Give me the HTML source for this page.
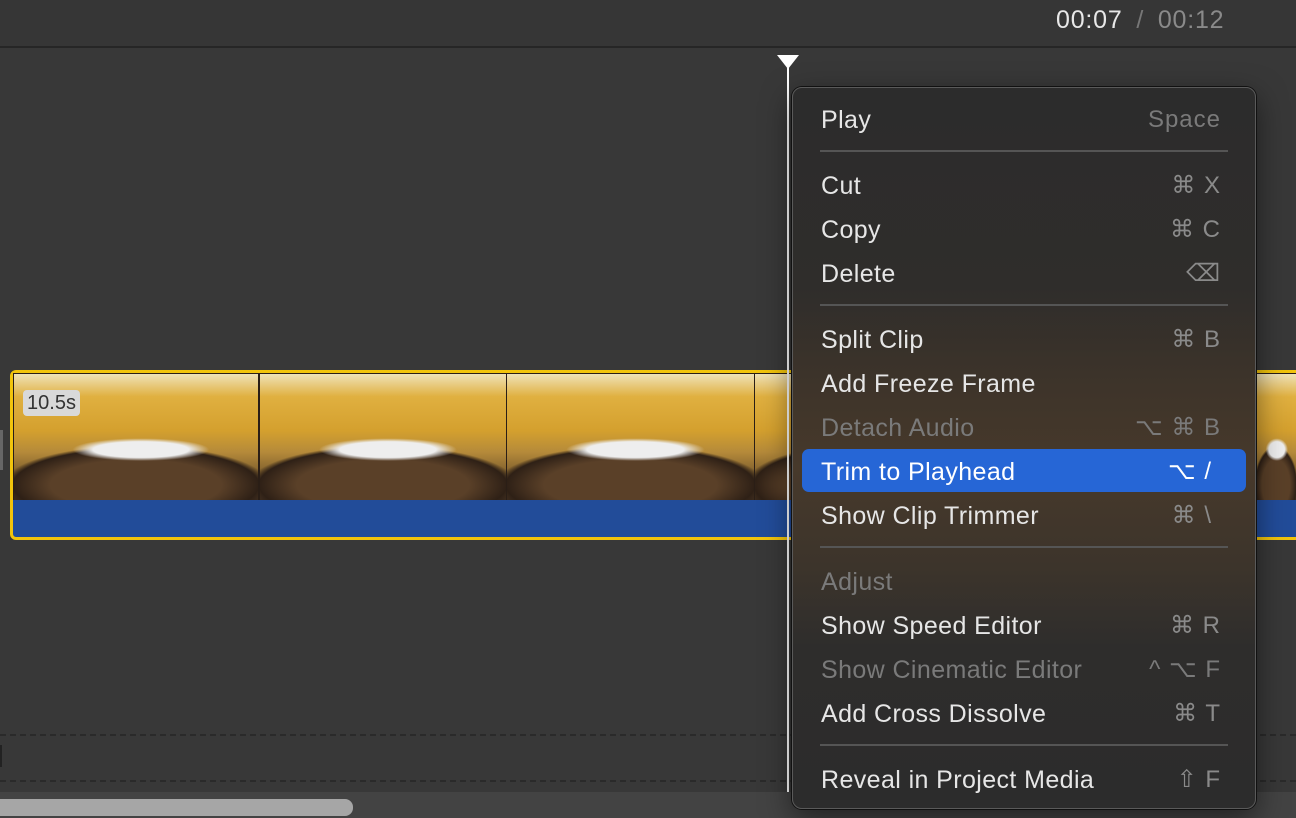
<!DOCTYPE html>
<html><head><meta charset="utf-8"><style>
*{margin:0;padding:0;box-sizing:border-box}
body{width:1296px;height:818px;overflow:hidden;background:#383838;font-family:"Liberation Sans",sans-serif;position:relative}
.abs{position:absolute}
.frame{position:absolute;top:374px;height:126px;overflow:hidden;
background:
radial-gradient(ellipse 28% 9% at 52% 60%,#eeeeee 0 70%,rgba(200,200,200,0) 100%),
radial-gradient(ellipse 70% 40% at 50% 88%,#5a4028 0 50%,#2e2016 72%,rgba(40,30,20,0) 78%),
linear-gradient(180deg,#efe2b8 0,#e0b040 18%,#d4a02e 45%,#b58a3a 62%,#3a2a1e 100%)}
.mi{position:absolute;left:821px;font-size:25px;letter-spacing:0.4px;color:#e6e6e6;line-height:30px}
.sc{position:absolute;right:75px;font-size:24px;color:#8a8a8a;line-height:30px;text-align:right;letter-spacing:1px}
.dis{color:#7a7a7a}
.sep{position:absolute;left:820px;width:408px;height:2px;background:#555}
</style></head><body>
<div class="abs" style="left:0;top:0;width:1296px;height:48px;background:#363636;border-bottom:2px solid #262626"></div>
<div class="abs" style="left:1056px;top:5px;font-size:25px;letter-spacing:0.8px;color:#e8e8e8;line-height:30px">00:07 <span style="color:#777;margin:0 6px">/</span> <span style="color:#8a8a8a">00:12</span></div>

<div class="abs" style="left:10px;top:370px;width:1300px;height:170px;border:3px solid #f2c40c;border-radius:6px;background:#224c99"></div>
<div class="abs" style="left:13px;top:373px;width:1290px;height:127px;background:#2a1e16"></div>
<div class="frame" style="left:14px;width:244px"></div>
<div class="frame" style="left:260px;width:246px"></div>
<div class="frame" style="left:507px;width:247px"></div>
<div class="frame" style="left:755px;width:200px"></div>
<div class="frame" style="left:1256px;width:40px"></div>
<div class="abs" style="left:23px;top:390px;width:57px;height:26px;background:#d9d9d9;border-radius:4px;font-size:20px;color:#333;line-height:26px;text-align:center">10.5s</div>
<div class="abs" style="left:0;top:430px;width:3px;height:40px;background:#666"></div>

<div class="abs" style="left:0;top:734px;width:1296px;border-top:2px dashed #2a2a2a"></div>
<div class="abs" style="left:0;top:780px;width:1296px;border-top:2px dashed #2a2a2a"></div>
<div class="abs" style="left:0;top:745px;width:2px;height:22px;background:#222"></div>
<div class="abs" style="left:0;top:792px;width:1296px;height:26px;background:#434343"></div>
<div class="abs" style="left:-10px;top:799px;width:363px;height:17px;background:#a6a6a6;border-radius:8px"></div>

<div class="abs" style="left:787px;top:60px;width:2px;height:732px;background:#fff"></div>
<div class="abs" style="left:777px;top:55px;width:0;height:0;border-left:11px solid transparent;border-right:11px solid transparent;border-top:14px solid #fff"></div>

<div class="abs" style="left:792px;top:87px;width:464px;height:722px;border-radius:10px;border:1px solid #5a5a5a;box-shadow:0 0 0 1px #111,0 10px 30px rgba(0,0,0,.5);
background:linear-gradient(180deg,#2c2c2c 0,#2f2d2b 200px,#3e342a 300px,#47392b 380px,#3c342b 480px,#2e2d2c 560px,#2c2c2c 100%)"></div>
<div class="abs" style="left:802px;top:449px;width:444px;height:43px;background:#2666d6;border-radius:7px"></div>

<div class="mi" style="top:105px">Play</div><div class="sc dis" style="top:105px">Space</div>
<div class="sep" style="top:150px"></div>
<div class="mi" style="top:171px">Cut</div><div class="sc" style="top:171px">⌘ X</div>
<div class="mi" style="top:215px">Copy</div><div class="sc" style="top:215px">⌘ C</div>
<div class="mi" style="top:259px">Delete</div><div class="sc" style="top:259px">⌫</div>
<div class="sep" style="top:304px"></div>
<div class="mi" style="top:325px">Split Clip</div><div class="sc" style="top:325px">⌘ B</div>
<div class="mi" style="top:369px">Add Freeze Frame</div>
<div class="mi dis" style="top:413px">Detach Audio</div><div class="sc dis" style="top:413px">⌥ ⌘ B</div>
<div class="mi" style="top:457px;color:#fff">Trim to Playhead</div><div class="sc" style="top:457px;color:#fff;right:84px">⌥ /</div>
<div class="mi" style="top:501px">Show Clip Trimmer</div><div class="sc" style="top:501px;right:84px">⌘ \</div>
<div class="sep" style="top:546px"></div>
<div class="mi dis" style="top:567px">Adjust</div>
<div class="mi" style="top:611px">Show Speed Editor</div><div class="sc" style="top:611px">⌘ R</div>
<div class="mi dis" style="top:655px">Show Cinematic Editor</div><div class="sc dis" style="top:655px">^ ⌥ F</div>
<div class="mi" style="top:699px">Add Cross Dissolve</div><div class="sc" style="top:699px">⌘ T</div>
<div class="sep" style="top:744px"></div>
<div class="mi" style="top:765px">Reveal in Project Media</div><div class="sc" style="top:765px">⇧ F</div>
</body></html>
